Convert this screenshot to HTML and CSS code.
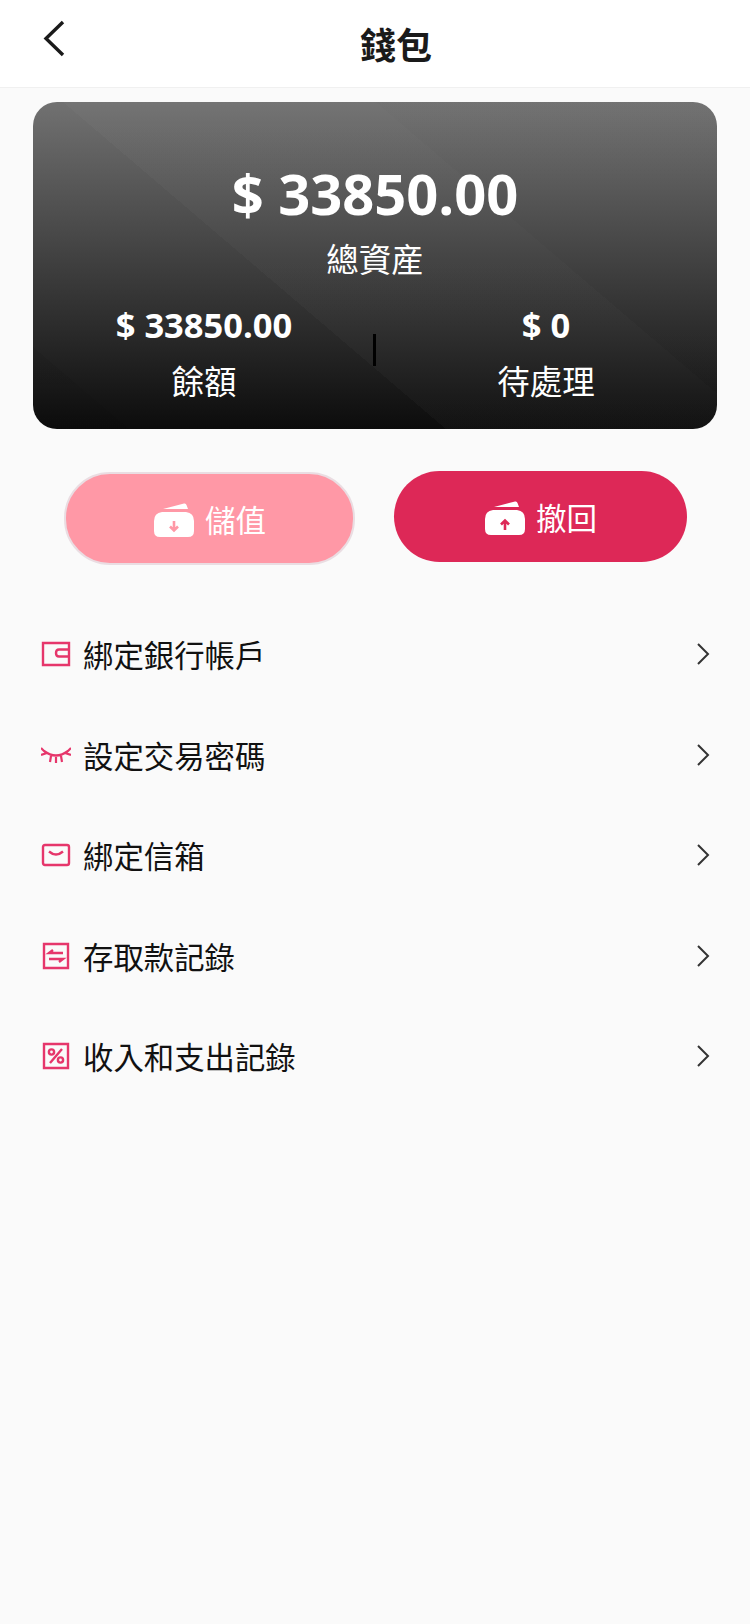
FILE: index.html
```html
<!DOCTYPE html>
<html lang="zh-Hant">
<head>
  <meta charset="UTF-8">
  <title>錢包</title>
  <link rel="stylesheet" href="styles.css">
</head>
<body>

  <header class="topbar">
    <svg class="back" width="24" height="37" viewBox="0 0 24 37"><path d="M21 2 L4 18.5 L21 35" fill="none" stroke="#1a1a1a" stroke-width="3.4"/></svg>
    <h1>錢包</h1>
  </header>

  <section class="card">
    <div class="total">$ 33850.00</div>
    <div class="total-label">總資産</div>
    <div class="sub">
      <div class="sub-item">
        <div class="sub-num">$ 33850.00</div>
        <div class="sub-label">餘額</div>
      </div>
      <div class="sub-item">
        <div class="sub-num">$ 0</div>
        <div class="sub-label">待處理</div>
      </div>
    </div>
    <span class="divider"></span>
  </section>

  <div class="actions">
    <a class="btn btn-in">
      <svg class="wallet" width="42" height="36" viewBox="0 0 42 36">
        <path d="M10 7 L31 1.5 Q33 1 33.5 3 L35 7 Z" fill="#fff"/>
        <path d="M9 10 H33 Q41 11 41 19 V29 Q41 35 35 35 H7 Q1 35 1 29 V19 Q1 11 9 10 Z" fill="#fff"/>
        <path d="M21 19 V28 M17 24.5 L21 28.5 L25 24.5" fill="none" stroke="#ff98a6" stroke-width="2.6"/>
      </svg>
      儲值
    </a>
    <a class="btn btn-out">
      <svg class="wallet" width="42" height="36" viewBox="0 0 42 36">
        <path d="M10 7 L31 1.5 Q33 1 33.5 3 L35 7 Z" fill="#fff"/>
        <path d="M9 10 H33 Q41 11 41 19 V29 Q41 35 35 35 H7 Q1 35 1 29 V19 Q1 11 9 10 Z" fill="#fff"/>
        <path d="M21 30 V21 M17 24.5 L21 20.5 L25 24.5" fill="none" stroke="#dd2857" stroke-width="2.6"/>
      </svg>
      撤回
    </a>
  </div>

  <ul class="menu">
    <li>
      <svg class="ico" width="30" height="26" viewBox="0 0 30 26"><path d="M2 2 H28 V24 H2 Z M28 8.5 H18 Q15 8.5 15 12 Q15 15.5 18 15.5 H28" fill="none" stroke="#e6366b" stroke-width="2.4"/></svg>
      <span>綁定銀行帳戶</span>
      <svg class="arrow" width="14" height="24" viewBox="0 0 14 24"><path d="M2 2 L12 12 L2 22" fill="none" stroke="#333" stroke-width="2"/></svg>
    </li>
    <li>
      <svg class="ico" width="30" height="24" viewBox="0 0 30 24"><path d="M3 8 Q15 17 27 8 M0 5 L5 10 M0 12 L6 10 M30 5 L25 10 M30 12 L24 10 M10 13 L9 19 M15 14 V20 M20 13 L21 19" fill="none" stroke="#e6366b" stroke-width="2.2"/></svg>
      <span>設定交易密碼</span>
      <svg class="arrow" width="14" height="24" viewBox="0 0 14 24"><path d="M2 2 L12 12 L2 22" fill="none" stroke="#333" stroke-width="2"/></svg>
    </li>
    <li>
      <svg class="ico" width="30" height="24" viewBox="0 0 30 24"><path d="M2 4 Q2 2 4 2 H26 Q28 2 28 4 V20 Q28 22 26 22 H4 Q2 22 2 20 Z M8 8.5 Q15 14.5 22 8.5" fill="none" stroke="#e6366b" stroke-width="2.4"/></svg>
      <span>綁定信箱</span>
      <svg class="arrow" width="14" height="24" viewBox="0 0 14 24"><path d="M2 2 L12 12 L2 22" fill="none" stroke="#333" stroke-width="2"/></svg>
    </li>
    <li>
      <svg class="ico" width="30" height="28" viewBox="0 0 30 28"><path d="M3 2 H27 V26 H3 Z M22 11 H8 L12 8 M8 17 H22 L18 20" fill="none" stroke="#e6366b" stroke-width="2.4"/></svg>
      <span>存取款記錄</span>
      <svg class="arrow" width="14" height="24" viewBox="0 0 14 24"><path d="M2 2 L12 12 L2 22" fill="none" stroke="#333" stroke-width="2"/></svg>
    </li>
    <li>
      <svg class="ico" width="30" height="28" viewBox="0 0 30 28"><path d="M3 2 H27 V26 H3 Z M21 7 L9 21" fill="none" stroke="#e6366b" stroke-width="2.4"/><circle cx="10.5" cy="10" r="2.6" fill="none" stroke="#e6366b" stroke-width="2.4"/><circle cx="19.5" cy="18" r="2.6" fill="none" stroke="#e6366b" stroke-width="2.4"/></svg>
      <span>收入和支出記錄</span>
      <svg class="arrow" width="14" height="24" viewBox="0 0 14 24"><path d="M2 2 L12 12 L2 22" fill="none" stroke="#333" stroke-width="2"/></svg>
    </li>
  </ul>

</body>
</html>
```

FILE: styles.css
```css
* {
  box-sizing: border-box;
}
body {
  margin: 0;
  min-height: 1624px;
  background-color: #fafafa;
  color: #111;
  font-family: "Open Sans", "Noto Sans CJK TC", sans-serif;
}
.topbar {
  display: flex;
  align-items: center;
  height: 88px;
  padding-left: 42px;
  background-color: #fff;
  border-bottom: 1px solid #f0f0f0;
}
.back {
  margin-top: -11px;
}
.topbar h1 {
  margin: 4px 0 0 294px;
  font-size: 36px;
  font-weight: 700;
  line-height: 1;
  color: #1a1a1a;
}
.card {
  position: relative;
  margin: 14px 33px 0;
  height: 327px;
  padding-top: 59px;
  border-radius: 24px;
  color: #fff;
  text-align: center;
  background:
    linear-gradient(40.5deg, rgba(0,0,0,.06) 0 9%, rgba(255,255,255,0) 9% 38.7%, rgba(255,255,255,.025) 38.7% 68%, rgba(255,255,255,.012) 68% 100%),
    linear-gradient(180deg, #717171 0%, #0c0c0c 100%);
}
.total {
  font-size: 56px;
  font-weight: 700;
  line-height: 64px;
}
.total-label {
  margin-top: 13px;
  font-size: 32.5px;
  line-height: 44px;
}
.sub {
  display: flex;
  margin-top: 21px;
}
.sub-item {
  flex: 1;
}
.sub-num {
  font-size: 34.5px;
  font-weight: 700;
  line-height: 44px;
}
.sub-label {
  margin-top: 13px;
  font-size: 32.5px;
  line-height: 44px;
}
.divider {
  position: absolute;
  left: 340px;
  top: 232px;
  width: 3px;
  height: 32px;
  background-color: #000;
}
.actions {
  display: flex;
  align-items: flex-start;
  gap: 39px;
  margin: 42px 63px 0 64px;
}
.btn {
  display: flex;
  align-items: center;
  justify-content: center;
  gap: 10px;
  border-radius: 46px;
  color: #fff;
  font-size: 30.5px;
}
.wallet {
  margin-top: 3px;
}
.btn-in {
  width: 291px;
  height: 93px;
  margin-top: 1px;
  background-color: #ff98a6;
  border: 2px solid #eadde2;
}
.btn-out {
  width: 293px;
  height: 91px;
  background-color: #dd2857;
}
.menu {
  list-style: none;
  margin: 39px 0 0;
  padding: 0 40px 0 41px;
}
.menu li {
  display: flex;
  align-items: center;
  height: 100.5px;
  font-size: 30.4px;
  color: #111;
}
.ico {
  flex: none;
}
.menu span {
  flex: 1;
  margin-left: 12px;
}
```
